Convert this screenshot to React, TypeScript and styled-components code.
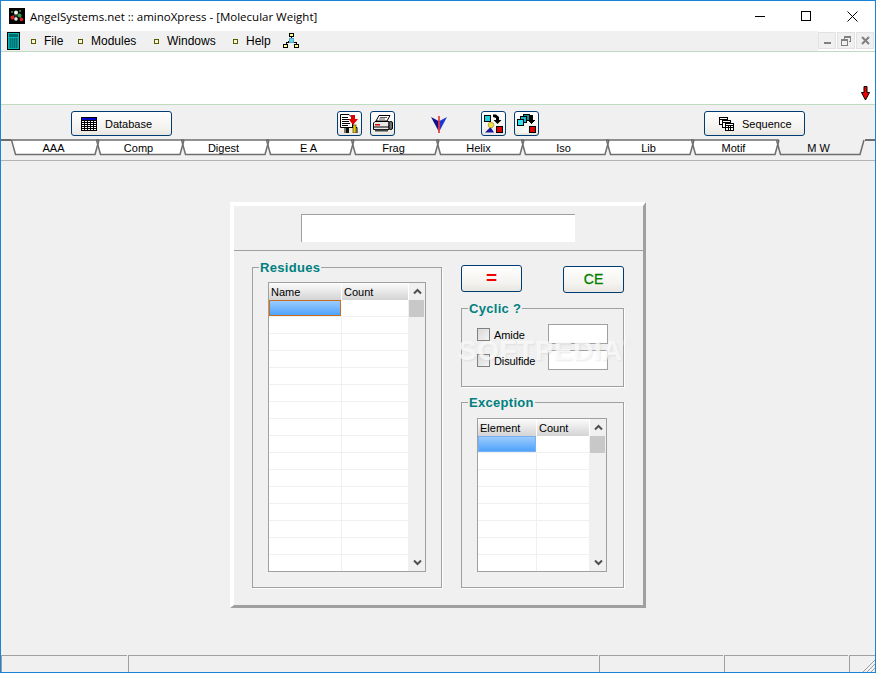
import styled, { createGlobalStyle } from "styled-components";

const GlobalStyle = createGlobalStyle`
  html, body {
    margin: 0;
    padding: 0;
    background: #f0f0f0;
  }
  * {
    box-sizing: border-box;
  }
`;

const MENU_ITEMS = [
  { label: "File", width: 47 },
  { label: "Modules", width: 76 },
  { label: "Windows", width: 79 },
  { label: "Help", width: 50 },
];
const TABS = ["AAA", "Comp", "Digest", "E A", "Frag", "Helix", "Iso", "Lib", "Motif", "M W"];

const GridTable = ({ first, second, firstWidth, secondWidth, rows, focused }: {
  first: string;
  second: string;
  firstWidth: number;
  secondWidth: number;
  rows: number;
  focused?: boolean;
}) => {
  const columns = `${firstWidth}px ${secondWidth}px`;
  return (
    <TableFrame>
      <TableColumns>
        <HeaderRow $columns={columns}>
          <HeaderCell>{first}</HeaderCell>
          <HeaderCell>{second}</HeaderCell>
        </HeaderRow>
        {Array.from({ length: rows }).map((_, i) => (
          <BodyRow key={i} $columns={columns}>
            {i === 0 ? <SelectedCell $focused={focused} /> : <BodyCell />}
            <BodyCell />
          </BodyRow>
        ))}
      </TableColumns>
      <ScrollBar>
        <ScrollButton>
          <svg width="9" height="7" viewBox="0 0 9 7">
            <path d="M1 5.5 L4.5 2 L8 5.5" fill="none" stroke="#505050" strokeWidth="2" />
          </svg>
        </ScrollButton>
        <ScrollThumb />
        <ScrollSpace />
        <ScrollButton>
          <svg width="9" height="7" viewBox="0 0 9 7">
            <path d="M1 1.5 L4.5 5 L8 1.5" fill="none" stroke="#505050" strokeWidth="2" />
          </svg>
        </ScrollButton>
      </ScrollBar>
    </TableFrame>
  );
};

const AppIcon = () => (
  <svg width="16" height="16" viewBox="0 0 16 16">
    <rect width="16" height="16" fill="#000" />
    <path d="M3 10L7 5L11 8L13 12M7 5L7 11" stroke="#606060" />
    <circle cx="3.5" cy="9.5" r="2" fill="#e02020" />
    <circle cx="7" cy="4.5" r="2" fill="#f4f4f4" />
    <circle cx="10.5" cy="7.5" r="2" fill="#30a040" />
    <circle cx="12.5" cy="11.5" r="1.8" fill="#e02020" />
    <circle cx="7" cy="11" r="1.8" fill="#e8e8e8" />
    <circle cx="3" cy="4" r="1" fill="#30a040" />
    <circle cx="11" cy="3" r="1" fill="#30a040" />
  </svg>
);

const CalcIcon = () => (
  <svg width="13" height="18" viewBox="0 0 13 18">
    <rect width="13" height="18" fill="#000" />
    <rect x="1" y="1" width="11" height="16" fill="#00b8b8" />
    <rect x="2" y="2" width="9" height="3" fill="#006868" />
    <path d="M2 7h9M2 9h9M2 11h9M2 13h9M2 15h9M3.5 6v10M5.5 6v10M7.5 6v10M9.5 6v10" stroke="#007070" strokeWidth="1" />
  </svg>
);

const NetworkIcon = () => (
  <svg width="16" height="16" viewBox="0 0 16 16" shapeRendering="crispEdges">
    <path d="M8 4V6M3 11V9H13V11M5 8H11" stroke="#000" fill="none" />
    <rect x="6" y="0.5" width="4" height="3" fill="#ffff80" stroke="#000" />
    <rect x="6" y="5.5" width="4" height="4" fill="#60d8f0" stroke="#60a0c0" />
    <rect x="0.5" y="11.5" width="4" height="3" fill="#ffff80" stroke="#000" />
    <rect x="11.5" y="11.5" width="4" height="3" fill="#ffff80" stroke="#000" />
  </svg>
);

const DatabaseIcon = () => (
  <svg width="16" height="14" viewBox="0 0 16 14" shapeRendering="crispEdges">
    <rect x="0.5" y="0.5" width="15" height="13" fill="#fff" stroke="#000" />
    <rect x="1" y="1" width="14" height="2" fill="#0000c8" />
    <path d="M1 3.5H15M1 5.5H15M1 7.5H15M1 9.5H15M1 11.5H15" stroke="#000" />
    <path d="M3.5 4V13M6.5 4V13M9.5 4V13M12.5 4V13" stroke="#000" />
  </svg>
);

const SequenceIcon = () => (
  <svg width="15" height="14" viewBox="0 0 15 14" shapeRendering="crispEdges">
    <rect x="0.5" y="0.5" width="8" height="7" fill="#fff" stroke="#000" />
    <path d="M1 2.5H8" stroke="#000" />
    <rect x="3.5" y="3.5" width="8" height="7" fill="#fff" stroke="#000" />
    <path d="M4 5.5H11" stroke="#000" />
    <rect x="6.5" y="6.5" width="8" height="7" fill="#fff" stroke="#000" />
    <path d="M7 8.5H14M7 10.5H14M9.5 8V13M11.5 8V13" stroke="#000" />
  </svg>
);

const ReportIcon = () => (
  <svg width="19" height="19" viewBox="0 0 19 19">
    <path d="M0.5 0.5H9L12.5 4V13.5H0.5Z" fill="#fff" stroke="#000" />
    <path d="M2 3.5H8M2 5.5H10M2 7.5H9M2 9.5H10M2 11.5H8" stroke="#000" />
    <path d="M11 1H15V5H18L13 11L8.5 5H11Z" fill="#e00000" />
    <path d="M5 19V13.5H17V19" fill="#f4f0e0" stroke="#000" />
    <rect x="6" y="14" width="3" height="5" fill="#101010" />
    <rect x="13" y="11" width="3" height="8" fill="#e8d000" stroke="#000" strokeWidth="0.5" />
  </svg>
);

const PrinterIcon = () => (
  <svg width="21" height="17" viewBox="0 0 21 17">
    <path d="M7 0.5H18L15 6H4Z" fill="#fff" stroke="#000" />
    <path d="M8 2.5H15M7 4H13" stroke="#606060" />
    <path d="M3 6.5H17V14.5H1.5V8Z" fill="#e8e8e8" stroke="#000" />
    <rect x="3" y="9" width="5" height="1.5" fill="#e00000" />
    <path d="M2 12H17" stroke="#000" />
    <rect x="17" y="6.5" width="3.5" height="8" rx="1.5" fill="#707070" stroke="#000" />
    <rect x="3" y="14.5" width="13" height="2" fill="#404040" />
  </svg>
);

const VeeIcon = () => (
  <svg width="16" height="17" viewBox="0 0 16 17">
    <path d="M0 1 L7.5 5 L7.5 15 Z" fill="#10108c" />
    <path d="M16 1 L8.5 5 L8.5 15 Z" fill="#1838d8" />
    <rect x="7.3" y="0" width="1.4" height="17" fill="#f01010" />
  </svg>
);

const SortSingleIcon = () => (
  <svg width="19" height="19" viewBox="0 0 19 19">
    <rect x="0.5" y="1.5" width="6" height="6" fill="#20d0e0" stroke="#000" />
    <path d="M9 0.5H12L15 3V6H17.5L13.5 10L9.5 6H12V4L9 3Z" fill="#000" />
    <path d="M6.5 13 L1 18.5 H10 Z" fill="#1818a0" />
    <circle cx="7" cy="11" r="2.8" fill="#f0e040" stroke="#807000" strokeWidth="0.5" />
    <rect x="12.5" y="12.5" width="6" height="6" fill="#e00000" stroke="#000" />
  </svg>
);

const SortGroupIcon = () => (
  <svg width="20" height="19" viewBox="0 0 20 19" shapeRendering="crispEdges">
    <rect x="6.5" y="0.5" width="6" height="6" fill="#109090" stroke="#000" />
    <rect x="3.5" y="2.5" width="6" height="6" fill="#20b8c8" stroke="#000" />
    <rect x="0.5" y="5.5" width="6" height="6" fill="#30e0f0" stroke="#000" />
    <path d="M13 1H16V6H19L14.5 10L11 6H13Z" fill="#000" />
    <rect x="12.5" y="12.5" width="6" height="6" fill="#e00000" stroke="#000" />
    <path d="M1 19 L8 13 H11 V19 Z" fill="#f8f8f8" />
  </svg>
);

const RedArrow = () => (
  <svg width="9" height="15" viewBox="0 0 9 15">
    <path d="M3 0.5H6V6.5H8.5L4.5 14L0.5 6.5H3Z" fill="#f00000" stroke="#000" />
  </svg>
);

const MinimizeGlyph = () => (
  <svg width="10" height="10" viewBox="0 0 10 10" shapeRendering="crispEdges">
    <path d="M0 5.5H10" stroke="#000" />
  </svg>
);

const MaximizeGlyph = () => (
  <svg width="10" height="10" viewBox="0 0 10 10" shapeRendering="crispEdges">
    <rect x="0.5" y="0.5" width="9" height="9" fill="none" stroke="#000" />
  </svg>
);

const CloseGlyph = () => (
  <svg width="11" height="11" viewBox="0 0 11 11">
    <path d="M0.5 0.5L10.5 10.5M10.5 0.5L0.5 10.5" stroke="#000" />
  </svg>
);

const TabShape = ({ active }: { active?: boolean }) => (
  <>
    {!active && (
      <TabFill width="89" height="17" viewBox="0 0 89 17">
        <path d="M0 1 L4 16 H84 L88 1 Z" fill="#fff" />
      </TabFill>
    )}
    <TabOutline width="89" height="17" viewBox="0 0 89 17">
      <path
        d={active ? "M0.5 1 L4.5 15.5 H84 L88 1" : "M0 1 H88 M0.5 1 L4.5 15.5 H84 L88 1"}
        fill="none"
        stroke="#6e6e6e"
        strokeWidth="1.5"
      />
    </TabOutline>
  </>
);

const App = () => {
  return (
    <>
      <GlobalStyle />
      <Window>
        <TitleBar>
          <AppIcon />
          <TitleText>AngelSystems.net :: aminoXpress - [Molecular Weight]</TitleText>
          <WindowControls>
            <WindowButton><MinimizeGlyph /></WindowButton>
            <WindowButton><MaximizeGlyph /></WindowButton>
            <WindowButton><CloseGlyph /></WindowButton>
          </WindowControls>
        </TitleBar>

        <MenuRow>
          <MenuStrip>
            <CalcIcon />
            <MenuList>
              {MENU_ITEMS.map((item) => (
                <MenuItem key={item.label} $width={item.width}>
                  <MenuBullet />
                  {item.label}
                </MenuItem>
              ))}
            </MenuList>
            <NetworkIcon />
          </MenuStrip>
          <MdiButtons>
            <MdiButton>
              <svg width="9" height="9" viewBox="0 0 9 9" shapeRendering="crispEdges">
                <rect x="1" y="6" width="7" height="2" fill="#808080" />
              </svg>
            </MdiButton>
            <MdiButton>
              <svg width="10" height="10" viewBox="0 0 10 10" shapeRendering="crispEdges">
                <path d="M3.5 2.5V0.5H9.5V5.5H7.5" fill="none" stroke="#808080" />
                <rect x="0.5" y="3.5" width="6" height="6" fill="none" stroke="#808080" />
                <path d="M1 4.5H6M4 1.5H9" stroke="#808080" />
              </svg>
            </MdiButton>
            <MdiButton>
              <svg width="9" height="9" viewBox="0 0 9 9">
                <path d="M1 1L8 8M8 1L1 8" stroke="#808080" strokeWidth="2" />
              </svg>
            </MdiButton>
          </MdiButtons>
        </MenuRow>

        <NotePanel>
          <RedArrow />
        </NotePanel>

        <Toolbar>
          <LabelButton $inset={9}>
            <DatabaseIcon />
            Database
          </LabelButton>
          <ToolGroup>
            <IconButton><ReportIcon /></IconButton>
            <IconButton><PrinterIcon /></IconButton>
            <VeeSlot><VeeIcon /></VeeSlot>
            <IconButton><SortSingleIcon /></IconButton>
            <IconButton><SortGroupIcon /></IconButton>
          </ToolGroup>
          <LabelButton $inset={14}>
            <SequenceIcon />
            Sequence
          </LabelButton>
        </Toolbar>

        <TabStrip>
          <TabStub $width={10} />
          {TABS.map((tab) => (
            <Tab key={tab}>
              <TabShape active={tab === "M W"} />
              <TabLabel>{tab}</TabLabel>
            </Tab>
          ))}
          <TabStub />
        </TabStrip>

        <Client>
          <Panel>
            <PanelHead>
              <WideField readOnly />
            </PanelHead>
            <PanelBody>
              <Group $width={190} $height={329}>
                <GroupTitle>Residues</GroupTitle>
                <GridTable first="Name" second="Count" firstWidth={73} secondWidth={67} rows={16} focused />
              </Group>
              <RightColumn>
                <ActionRow>
                  <EqualsButton>=</EqualsButton>
                  <ClearButton>CE</ClearButton>
                </ActionRow>
                <Group $width={163} $height={87}>
                  <GroupTitle>Cyclic ?</GroupTitle>
                  <OptionList>
                    <OptionRow>
                      <CheckBox />
                      <OptionLabel>Amide</OptionLabel>
                      <SmallField readOnly />
                    </OptionRow>
                    <OptionRow>
                      <CheckBox />
                      <OptionLabel>Disulfide</OptionLabel>
                      <SmallField readOnly />
                    </OptionRow>
                  </OptionList>
                </Group>
                <Group $width={163} $height={194}>
                  <GroupTitle>Exception</GroupTitle>
                  <GridTable first="Element" second="Count" firstWidth={59} secondWidth={53} rows={8} />
                </Group>
              </RightColumn>
            </PanelBody>
            <Watermark>SOFTPEDIA<sup>®</sup></Watermark>
          </Panel>
        </Client>

        <StatusBar>
          <StatusCell $width={126} />
          <StatusCell $width={470} />
          <StatusCell $width={124} />
          <StatusCell $width={124} />
          <StatusGrip>
            <svg width="12" height="12" viewBox="0 0 12 12">
              <path d="M0 12L12 0M4 12L12 4M8 12L12 8" stroke="#a0a0a0" strokeWidth="1" />
            </svg>
          </StatusGrip>
        </StatusBar>
      </Window>
    </>
  );
};

export default App;

const Window = styled.div`
  width: 876px;
  height: 673px;
  display: flex;
  flex-direction: column;
  border: 1px solid #1883d7;
  background: #f0f0f0;
  overflow: hidden;
  font-family: "Liberation Sans", Arial, sans-serif;
  color: #000;
`;

const TitleBar = styled.div`
  height: 30px;
  flex: none;
  display: flex;
  align-items: center;
  padding-left: 8px;
  background: #fff;
`;

const TitleText = styled.div`
  margin-left: 5px;
  font-family: "Open Sans", sans-serif;
  font-size: 11.5px;
  color: #000;
  white-space: nowrap;
`;

const WindowControls = styled.div`
  margin-left: auto;
  display: flex;
  height: 100%;
`;

const WindowButton = styled.div`
  width: 46px;
  height: 100%;
  display: flex;
  align-items: center;
  justify-content: center;
`;

const MenuRow = styled.div`
  height: 20px;
  flex: none;
  display: flex;
  background: #fff;
`;

const MenuStrip = styled.div`
  flex: 1;
  display: flex;
  align-items: center;
  padding-left: 6px;
  background: #f0f0f0;
  font-size: 12px;
`;

const MenuList = styled.div`
  display: flex;
  margin-left: 11px;
`;

const MenuItem = styled.div<{ $width: number }>`
  width: ${({ $width }) => $width}px;
  display: flex;
  align-items: center;
  gap: 8px;
  white-space: nowrap;
`;

const MenuBullet = styled.span`
  width: 5px;
  height: 5px;
  flex: none;
  border: 1px solid #5a5a00;
  background: #f8f8d8;
`;

const MdiButtons = styled.div`
  width: 57px;
  display: flex;
  gap: 1px;
  padding: 1px 0 2px;
`;

const MdiButton = styled.div`
  width: 18px;
  height: 17px;
  display: flex;
  align-items: center;
  justify-content: center;
  border: 1px solid #e2e2e2;
  background: #f0f0f0;
`;

const NotePanel = styled.div`
  height: 54px;
  flex: none;
  display: flex;
  justify-content: flex-end;
  align-items: flex-end;
  padding: 0 5px 3px 0;
  background: #fff;
  border-top: 1px solid #c0dcc0;
  border-bottom: 1px solid #c0dcc0;
`;

const Toolbar = styled.div`
  height: 34px;
  flex: none;
  display: flex;
  justify-content: space-between;
  align-items: flex-start;
  padding: 6px 70px 0;
`;

const ToolGroup = styled.div`
  display: flex;
  gap: 8px;
`;

const ButtonFace = styled.div`
  display: flex;
  align-items: center;
  justify-content: center;
  border: 1px solid #003c74;
  border-radius: 3px;
  background: linear-gradient(#ffffff, #f4f2ee 70%, #e8e6e1);
`;

const LabelButton = styled(ButtonFace)<{ $inset: number }>`
  width: 101px;
  height: 25px;
  justify-content: flex-start;
  padding-left: ${({ $inset }) => $inset}px;
  gap: 8px;
  font-size: 11px;
`;

const IconButton = styled(ButtonFace)`
  width: 25px;
  height: 25px;
`;

const VeeSlot = styled.div`
  width: 16px;
  height: 25px;
  margin: 0 26px 0 28px;
  display: flex;
  align-items: center;
  padding-top: 2px;
`;

const TabStrip = styled.div`
  height: 22px;
  flex: none;
  display: flex;
  align-items: flex-start;
  border-bottom: 1px solid #b4b4b4;
`;

const TabStub = styled.div<{ $width?: number }>`
  flex: ${({ $width }) => ($width ? `0 0 ${$width}px` : "1")};
  height: 2px;
  border-top: 2px solid #6e6e6e;
`;

const Tab = styled.div`
  position: relative;
  width: 89px;
  height: 17px;
  flex: none;
  margin-right: -4px;
  display: flex;
  align-items: center;
  justify-content: center;

  &:nth-last-child(2) {
    margin-right: 0;
  }
`;

const TabFill = styled.svg`
  position: absolute;
  left: 0;
  top: 0;
`;

const TabOutline = styled.svg`
  position: absolute;
  left: 0;
  top: 0;
  z-index: 1;
`;

const TabLabel = styled.span`
  position: relative;
  z-index: 2;
  font-size: 11px;
  margin-right: 1px;
  margin-left: -3px;
  margin-top: 1px;
`;

const Client = styled.div`
  flex: 1;
  min-height: 0;
  padding: 41px 0 0 229px;
  background: #f0f0f0;
`;

const Panel = styled.div`
  position: relative;
  width: 416px;
  height: 406px;
  border-style: solid;
  border-width: 4px 3px 3px 4px;
  border-color: #fff #a0a0a0 #a0a0a0 #fff;
`;

const PanelHead = styled.div`
  height: 45px;
  padding: 8px 0 0 67px;
  border-bottom: 1px solid #a0a0a0;
`;

const WideField = styled.input`
  display: block;
  width: 274px;
  height: 28px;
  padding: 0;
  background: #fff;
  border: none;
  border-top: 1px solid #a0a0a0;
  border-left: 1px solid #a0a0a0;
  outline: none;
`;

const PanelBody = styled.div`
  display: flex;
  align-items: flex-start;
  padding: 8px 0 0 18px;
`;

const RightColumn = styled.div`
  display: flex;
  flex-direction: column;
  gap: 7px;
  margin-left: 19px;
  margin-top: 6px;
`;

const ActionRow = styled.div`
  width: 163px;
  height: 28px;
  display: flex;
  justify-content: space-between;
  align-items: flex-start;
`;

const EqualsButton = styled(ButtonFace)`
  width: 61px;
  height: 27px;
  padding-bottom: 2px;
  color: #f00000;
  font-size: 19px;
  font-weight: 700;
`;

const ClearButton = styled(ButtonFace)`
  width: 61px;
  height: 27px;
  margin-top: 1px;
  padding-bottom: 1px;
  color: #008000;
  font-size: 14px;
  -webkit-text-stroke: 0.3px #008000;
`;

const Group = styled.fieldset<{ $width: number; $height: number }>`
  width: ${({ $width }) => $width}px;
  height: ${({ $height }) => $height}px;
  min-width: 0;
  margin: 0;
  padding: 7px 15px 0;
  border: 1px solid #a0a0a0;
  box-shadow: 1px 1px 0 #fff;
`;

const GroupTitle = styled.legend`
  height: 16px;
  margin-left: -9px;
  padding: 0 1px;
  color: #008080;
  font-size: 13px;
  font-weight: 700;
  letter-spacing: 0.3px;
  line-height: 18px;
`;

const TableFrame = styled.div`
  display: flex;
  width: fit-content;
  height: 290px;
  background: #fff;
  border: 1px solid #a0a0a0;
  overflow: hidden;

  ${RightColumn} & {
    height: 154px;
    margin-top: 1px;
  }
`;

const TableColumns = styled.div`
  display: flex;
  flex-direction: column;
`;

const HeaderRow = styled.div<{ $columns: string }>`
  display: grid;
  grid-template-columns: ${({ $columns }) => $columns};
  height: 17px;
  flex: none;
  background: linear-gradient(#fcfcfc, #d4d4d4);
`;

const HeaderCell = styled.div`
  padding-left: 2px;
  font-size: 11px;
  line-height: 18px;
  border-right: 1px solid #fff;
`;

const BodyRow = styled.div<{ $columns: string }>`
  display: grid;
  grid-template-columns: ${({ $columns }) => $columns};
  height: 17px;
  flex: none;
  border-bottom: 1px solid #f0f0f0;
`;

const BodyCell = styled.div`
  border-right: 1px solid #f0f0f0;
`;

const SelectedCell = styled.div<{ $focused?: boolean }>`
  margin-right: 1px;
  background: linear-gradient(#9ccbfd, #4fa3fb);
  border: 1px solid ${({ $focused }) => ($focused ? "#c87020" : "#74b2f5")};
`;

const ScrollBar = styled.div`
  width: 16px;
  display: flex;
  flex-direction: column;
  background: #f0f0f0;
`;

const ScrollButton = styled.div`
  height: 17px;
  flex: none;
  display: flex;
  align-items: center;
  justify-content: center;
`;

const ScrollThumb = styled.div`
  height: 17px;
  flex: none;
  background: #c8c8c8;
  margin-right: 1px;
`;

const ScrollSpace = styled.div`
  flex: 1;
`;

const OptionList = styled.div`
  display: flex;
  flex-direction: column;
  gap: 6px;
  margin-top: 1px;
`;

const OptionRow = styled.div`
  height: 20px;
  display: flex;
  align-items: center;
`;

const CheckBox = styled.span`
  width: 13px;
  height: 13px;
  flex: none;
  border: 1px solid #808080;
  background: linear-gradient(135deg, #d8d8d8, #f4f4f4);
`;

const OptionLabel = styled.span`
  position: relative;
  z-index: 1;
  margin: 2px 0 0 4px;
  font-size: 11px;
  letter-spacing: -0.1px;
`;

const SmallField = styled.input`
  display: block;
  width: 60px;
  height: 20px;
  margin-left: auto;
  padding: 0;
  background: #fff;
  border: 1px solid #a0a0a0;
  outline: none;
`;

const Watermark = styled.div`
  position: absolute;
  left: 224px;
  top: 129px;
  color: rgba(255, 255, 255, 0.7);
  font-size: 28px;
  font-weight: 700;
  letter-spacing: 0.5px;
  text-shadow: 1px 1px 2px rgba(200, 200, 200, 0.4);
  white-space: nowrap;
  pointer-events: none;

  sup {
    font-size: 9px;
    font-weight: 400;
    vertical-align: 14px;
    line-height: 0;
  }
`;

const StatusBar = styled.div`
  height: 17px;
  flex: none;
  display: flex;
`;

const StatusCell = styled.div<{ $width: number }>`
  width: ${({ $width }) => $width}px;
  height: 100%;
  margin-right: 1px;
  border-top: 1px solid #a0a0a0;
  border-left: 1px solid #a0a0a0;
`;

const StatusGrip = styled.div`
  flex: 1;
  height: 100%;
  display: flex;
  justify-content: flex-end;
  align-items: flex-end;
  border-top: 1px solid #a0a0a0;
  border-left: 1px solid #a0a0a0;
`;
